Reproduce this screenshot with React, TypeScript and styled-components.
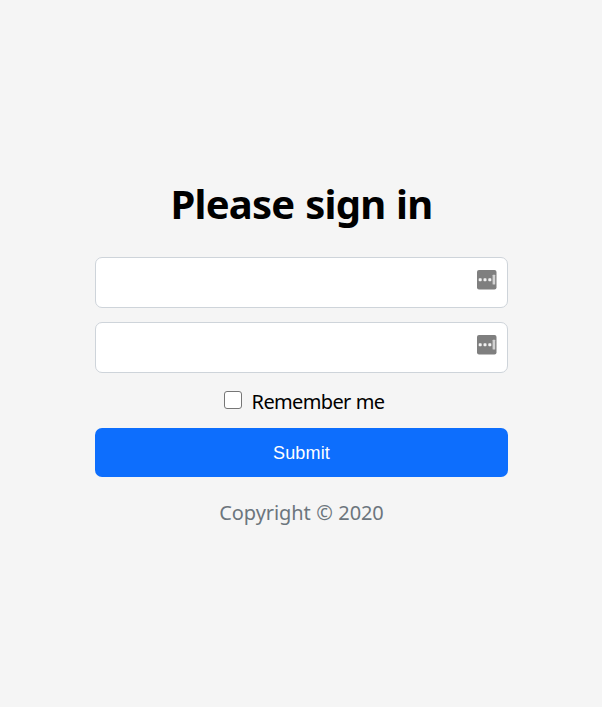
import React from "react";
import styled, { createGlobalStyle } from "styled-components";

const GlobalStyle = createGlobalStyle`
  * { box-sizing: border-box; }
  html, body { margin: 0; background: #f5f5f5; }
`;

const Page = styled.main`
  display: flex;
  justify-content: center;
  min-height: 100vh;
  padding: 176px 0 0 1px;
  background: #f5f5f5;
  font-family: "Segoe UI", "Noto Sans", sans-serif;
`;

const Form = styled.form`
  display: flex;
  flex-direction: column;
  width: 413px;
`;

const Title = styled.h1`
  margin: 0 0 25px;
  height: 56px;
  font-size: 40px;
  line-height: 56px;
  font-weight: 700;
  letter-spacing: -0.75px;
  word-spacing: 1px;
  text-align: center;
  white-space: nowrap;
  color: #000;
`;

const Field = styled.div`
  display: flex;
  align-items: flex-start;
  height: 51px;
  margin-bottom: 14px;
  padding: 12px 10px 0 12px;
  border: 1px solid #ced4da;
  border-radius: 7px;
  background: #fff;
`;

const Input = styled.input`
  flex: 1;
  min-width: 0;
  height: 24px;
  padding: 0;
  border: 0;
  outline: 0;
  background: transparent;
  font: inherit;
  font-size: 18px;
`;

const Remember = styled.label`
  display: flex;
  align-items: center;
  height: 26px;
  margin: 2px 0 13px 129px;
  font-size: 20px;
  line-height: 26px;
  white-space: nowrap;
  color: #000;
`;

const Checkbox = styled.input`
  appearance: none;
  flex: none;
  width: 18px;
  height: 18px;
  margin: 0 10px 4px 0;
  border: 1.5px solid #767676;
  border-radius: 3px;
  background: #fff;

  &:checked { background: #0d6efd; }
`;

const RememberText = styled.span`
  margin-left: -0.4px;
  letter-spacing: -0.65px;
  word-spacing: 0.5px;
`;

const Submit = styled.button`
  height: 49px;
  padding: 2px 0 0;
  border: 0;
  border-radius: 7px;
  background: #0d6efd;
  color: #fff;
  font: 18px/47px "Liberation Sans", Arial, sans-serif;
  letter-spacing: 0.15px;
`;

const Copyright = styled.p`
  margin: 22px 0 0;
  font-size: 20px;
  line-height: 28px;
  text-align: center;
  letter-spacing: -0.1px;
  word-spacing: 0.5px;
  color: #6c757d;
`;

const PasswordIcon = () => (
  <svg width="20" height="20" viewBox="0 0 20 20" aria-hidden="true">
    <rect width="19.5" height="19.5" rx="2" fill="#7f7f7f" />
    <g fill="#f2f2f2">
      <rect x="1.7" y="8.2" width="3" height="3" rx="0.8" />
      <rect x="6.5" y="8.2" width="3" height="3" rx="0.8" />
      <rect x="11.3" y="8.2" width="3" height="3" rx="0.8" />
    </g>
    <rect x="15.6" y="4.8" width="2.6" height="9.8" rx="0.5" fill="#d2d2d2" />
  </svg>
);

export default function App() {
  return (
    <>
      <GlobalStyle />
      <Page>
        <Form onSubmit={(event) => event.preventDefault()}>
          <Title>Please sign in</Title>
          <Field>
            <Input type="email" aria-label="Email address" />
            <PasswordIcon />
          </Field>
          <Field>
            <Input type="password" aria-label="Password" />
            <PasswordIcon />
          </Field>
          <Remember>
            <Checkbox type="checkbox" />
            <RememberText>Remember me</RememberText>
          </Remember>
          <Submit type="submit">Submit</Submit>
          <Copyright>Copyright © 2020</Copyright>
        </Form>
      </Page>
    </>
  );
}
